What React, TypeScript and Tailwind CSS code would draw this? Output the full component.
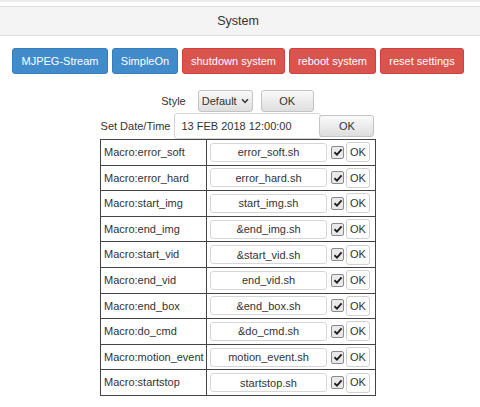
import React from 'react';

const macros: [string, string][] = [
  ['Macro:error_soft', 'error_soft.sh'],
  ['Macro:error_hard', 'error_hard.sh'],
  ['Macro:start_img', 'start_img.sh'],
  ['Macro:end_img', '&end_img.sh'],
  ['Macro:start_vid', '&start_vid.sh'],
  ['Macro:end_vid', 'end_vid.sh'],
  ['Macro:end_box', '&end_box.sh'],
  ['Macro:do_cmd', '&do_cmd.sh'],
  ['Macro:motion_event', 'motion_event.sh'],
  ['Macro:startstop', 'startstop.sh'],
];

const Check = () => (
  <span className="inline-flex h-[13px] w-[13px] items-center justify-center rounded-[2px] border border-[#8a8a8a] bg-[#e9e9e9]">
    <svg width="10" height="10" viewBox="0 0 10 10">
      <path d="M1.5 5.2 L4 7.6 L8.6 2.4" fill="none" stroke="#222" strokeWidth="1.9" />
    </svg>
  </span>
);

const GreyButton: React.FC<{ className?: string; children: React.ReactNode }> = ({ className = '', children }) => (
  <button className={`rounded-[3px] border border-[#c4c4c4] bg-gradient-to-b from-[#fafafa] to-[#dedede] text-[#333] ${className}`}>
    {children}
  </button>
);

export default function App() {
  return (
    <div className="h-[407px] w-[480px] overflow-hidden bg-white text-[11px] text-[#333]" style={{ fontFamily: '"Liberation Sans", Arial, sans-serif' }}>
      <div className="h-[2px] bg-[#ececec]" />
      <div className="mt-[4px] flex h-[30px] items-center justify-center border-y border-[#dedede] bg-[#f4f4f4] pr-[4px] text-[12.5px] text-[#333]">
        System
      </div>

      <div className="mt-[12px] flex justify-center gap-[4px] pr-[4px]">
        <button className="h-[26px] w-[96px] rounded-[3px] border border-[#357ebd] bg-[#428bca] text-[11px] text-white">MJPEG-Stream</button>
        <button className="h-[26px] w-[66px] rounded-[3px] border border-[#357ebd] bg-[#428bca] text-[11px] text-white">SimpleOn</button>
        <button className="h-[26px] w-[103px] rounded-[3px] border border-[#d43f3a] bg-[#d9534f] text-[11px] text-white">shutdown system</button>
        <button className="h-[26px] w-[87px] rounded-[3px] border border-[#d43f3a] bg-[#d9534f] text-[11px] text-white">reboot system</button>
        <button className="h-[26px] w-[84px] rounded-[3px] border border-[#d43f3a] bg-[#d9534f] text-[11px] text-white">reset settings</button>
      </div>

      <div className="mt-[16px] flex items-center justify-center pr-[5px]">
        <span className="mr-[12px]">Style</span>
        <GreyButton className="flex h-[22px] w-[55px] items-center justify-center gap-[4px] text-[11px]">
          Default
          <svg width="8" height="6" viewBox="0 0 8 6">
            <path d="M1 1.2 L4 4.4 L7 1.2" fill="none" stroke="#333" strokeWidth="1.5" />
          </svg>
        </GreyButton>
        <GreyButton className="ml-[8px] h-[22px] w-[53px] text-[11px]">OK</GreyButton>
      </div>

      <div className="mt-[1px] flex items-center justify-center pr-[5px]">
        <span className="mr-[4px]">Set Date/Time</span>
        <input
          readOnly
          value="13 FEB 2018 12:00:00"
          className="h-[26px] w-[147px] rounded-[3px] border border-[#d4d4d4] bg-white pl-[6px] text-[11px] text-[#333] outline-none"
        />
        <GreyButton className="-ml-[2px] h-[22px] w-[55px] text-[11px]">OK</GreyButton>
      </div>

      <div className="mt-[0px] flex justify-center pr-[4px]">
        <table className="border-collapse border border-[#444]">
          <tbody>
            {macros.map(([name, file]) => (
              <tr key={name} className="h-[25.6px]">
                <td className="w-[106px] border border-[#444] pl-[3px] text-left">{name}</td>
                <td className="w-[169px] border border-[#444] px-[3px]">
                  <div className="flex items-center">
                    <input
                      readOnly
                      value={file}
                      className="h-[19px] w-[117px] rounded-[3px] border border-[#d6d6d6] bg-white text-center text-[11px] text-[#333] outline-none"
                    />
                    <span className="ml-[4px] flex">
                      <Check />
                    </span>
                    <button className="ml-[2px] h-[20px] w-[24px] rounded-[3px] border border-[#d0d0d0] bg-white text-[11px] text-[#333]">OK</button>
                  </div>
                </td>
              </tr>
            ))}
          </tbody>
        </table>
      </div>
    </div>
  );
}
